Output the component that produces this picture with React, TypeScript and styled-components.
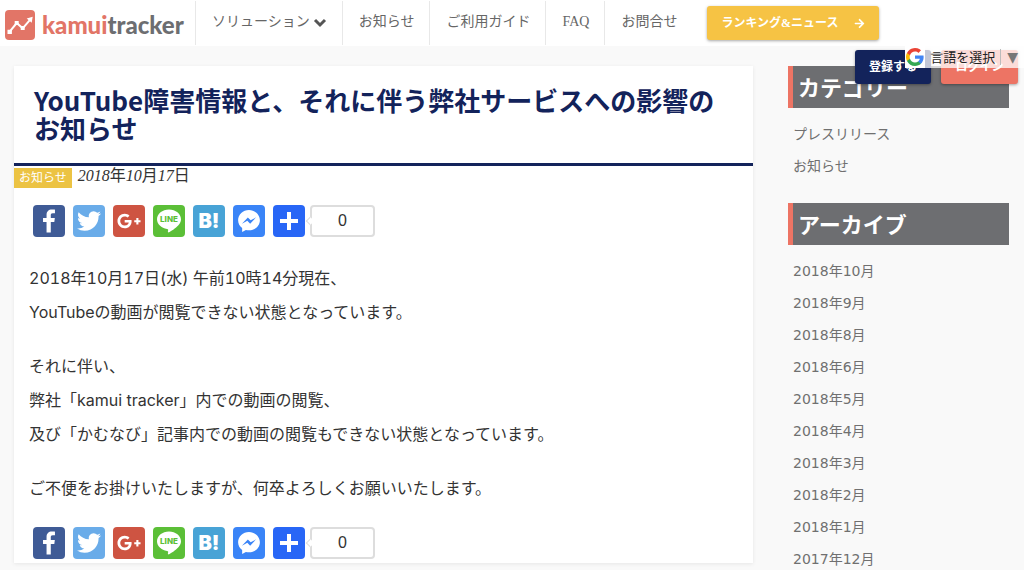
import React from "react";
import styled, { createGlobalStyle } from "styled-components";
import { FaArrowRight, FaGooglePlusG } from "react-icons/fa";

const sans = `Inter, "Noto Sans CJK JP", sans-serif`;
const serif = `"Liberation Serif", "Noto Sans CJK JP", serif`;

const colors = {
  navy: "#13235b",
  coral: "#ed7464",
  amber: "#f6c344",
  slate: "#6d6e71",
};

const GlobalStyle = createGlobalStyle`
  *, *::before, *::after { box-sizing: border-box; }
  body {
    margin: 0;
    background: #f9f9f9;
    color: #333;
    font-family: ${sans};
    font-size: 16px;
    font-variant-numeric: tabular-nums;
  }
  h1, h2, p, ul { margin: 0; padding: 0; }
  ul { list-style: none; }
  a { color: inherit; text-decoration: none; }
  button { border: 0; cursor: pointer; }
  svg { display: block; }
`;

const Header = styled.header`
  position: relative;
  z-index: 1;
  display: flex;
  height: 46px;
  background: #fff;
`;

const Logo = styled.a`
  display: flex;
  align-items: center;
  gap: 7px;
  width: 195px;
  padding: 4px 0 0 5px;
`;

const Wordmark = styled.span`
  color: ${colors.slate};
  font: 900 24px/30px Lato, sans-serif;

  em {
    color: #e27567;
    font-style: normal;
  }
`;

const Nav = styled.nav`
  display: flex;
  padding: 1px 0;
`;

const NavLink = styled.a`
  display: flex;
  align-items: center;
  gap: 3px;
  padding: 0 15px 2px 16px;
  border-left: 1px solid #e8e8e8;
  color: #666;
  font: 14px/20px ${serif};
  white-space: nowrap;
`;

const ActionButton = styled.button<{ $bg: string }>`
  display: flex;
  align-items: center;
  justify-content: center;
  gap: 16px;
  height: 34px;
  padding: 0 14px;
  border-radius: 3px;
  background: ${(p) => p.$bg};
  box-shadow: 0 1px 3px rgba(0, 0, 0, 0.35);
  color: #fff;
  font: 700 12px/16px ${serif};
  white-space: nowrap;
`;

const NewsSlot = styled.div`
  padding: 6px 0 0 15px;
`;

const Account = styled.div`
  position: absolute;
  top: 50px;
  right: 6px;
  display: grid;
  grid-template-columns: 76px 77px;
  gap: 10px;
`;

const LanguageButton = styled.button`
  position: absolute;
  top: 46px;
  right: 0;
  display: flex;
  align-items: center;
  height: 22px;
  padding: 0;
  background: rgba(255, 255, 255, 0.75);
  color: #222;
  font: 13px/20px ${sans};
`;

const GoogleMark = styled.span`
  padding: 1px;
  margin-right: 5px;
  background: #fff;
`;

const Caret = styled.span`
  margin-left: 5px;
  padding: 0 6px;
  border-left: 1px solid #bbb;
  color: #777;
  font: 14px/16px "DejaVu Sans", sans-serif;
`;

const Layout = styled.div`
  display: flex;
  align-items: flex-start;
  gap: 35px;
  padding: 20px 15px 0 14px;
`;

const Article = styled.article`
  flex: 1;
  min-width: 0;
  padding-bottom: 4px;
  background: #fff;
  box-shadow: 0 1px 4px rgba(0, 0, 0, 0.08);
`;

const Title = styled.h1`
  padding: 20px 20px 21px;
  border-bottom: 3px solid ${colors.navy};
  color: ${colors.navy};
  font: 700 26px/28px "Noto Sans CJK JP", sans-serif;
`;

const Meta = styled.div`
  display: flex;
  align-items: flex-start;
  gap: 6px;
  margin-bottom: 17px;
`;

const Tag = styled.a`
  margin-top: 2px;
  padding: 0 5px;
  background: #ecc343;
  color: #fff;
  font-size: 12px;
  line-height: 20px;
`;

const PostDate = styled.time`
  font: 16px/20px ${serif};
`;

const ShareRow = styled.div`
  display: flex;
  gap: 8px;
  padding: 0 19px;
`;

const ShareLink = styled.a<{ $bg: string }>`
  display: grid;
  place-items: center;
  width: 32px;
  height: 32px;
  border-radius: 4px;
  background: ${(p) => p.$bg};
  color: #fff;
`;

const Count = styled.span`
  position: relative;
  width: 65px;
  margin-left: -3px;
  border: 2px solid #ddd;
  border-radius: 4px;
  font: 16px/28px "Liberation Sans", sans-serif;
  text-align: center;

  &::before {
    content: "";
    position: absolute;
    top: 11px;
    left: -5px;
    width: 6px;
    height: 6px;
    border: solid #ddd;
    border-width: 0 0 1px 1px;
    background: #fff;
    transform: rotate(45deg);
  }
`;

const Body = styled.div`
  display: grid;
  gap: 20px;
  padding: 24px 15px 22px;
  line-height: 34px;
`;

const Sidebar = styled.aside`
  flex: 0 0 221px;
  display: grid;
  gap: 21px;
`;

const SideTitle = styled.h2`
  padding: 2px 5px 0;
  border-left: 5px solid ${colors.coral};
  background: ${colors.slate};
  color: #fff;
  font: 700 22px/40px ${sans};
`;

const SideList = styled.ul`
  padding: 10px 5px 0;
  color: #707070;
  font-size: 14px;
  line-height: 32px;
`;

const ArchiveList = styled(SideList)`
  font-family: "DejaVu Sans", "Noto Sans CJK JP", sans-serif;
`;

const glyphs = {
  facebook:
    "M17.78 27.5V17.008h3.522l.527-4.09h-4.05v-2.61c0-1.182.33-1.99 2.023-1.99h2.166V4.66c-.375-.05-1.66-.16-3.155-.16-3.123 0-5.26 1.905-5.26 5.405v3.016h-3.53v4.09h3.53V27.5h4.223z",
  twitter:
    "M28 8.557a9.913 9.913 0 0 1-2.828.775 4.93 4.93 0 0 0 2.166-2.725 9.738 9.738 0 0 1-3.13 1.194 4.92 4.92 0 0 0-3.593-1.55 4.924 4.924 0 0 0-4.794 6.049c-4.09-.21-7.72-2.17-10.15-5.15a4.942 4.942 0 0 0-.665 2.477c0 1.71.87 3.214 2.19 4.1a4.968 4.968 0 0 1-2.23-.616v.06c0 2.39 1.7 4.38 3.952 4.83-.414.115-.85.174-1.297.174-.318 0-.626-.03-.928-.086a4.935 4.935 0 0 0 4.6 3.42 9.893 9.893 0 0 1-6.114 2.107c-.398 0-.79-.023-1.175-.068a13.953 13.953 0 0 0 7.55 2.213c9.056 0 14.01-7.507 14.01-14.013 0-.213-.005-.426-.015-.637.96-.695 1.795-1.56 2.455-2.55z",
  messenger:
    "M16 5C9.986 5 5.11 9.56 5.11 15.182c0 3.2 1.58 6.054 4.046 7.92V27l3.716-2.06c.99.276 2.04.425 3.128.425 6.014 0 10.89-4.56 10.89-10.183S22.013 5 16 5zm1.147 13.655L14.33 15.73l-5.423 3 5.946-6.31 2.816 2.925 5.42-3-5.946 6.31z",
  more: "M14 7h4v18h-4zM7 14h18v4H7z",
};

const Glyph = ({ d }: { d: string }) => (
  <svg width="32" height="32" viewBox="0 0 32 32" fill="currentColor" aria-hidden="true">
    <path d={d} />
  </svg>
);

const ChevronIcon = () => (
  <svg width="14" height="12" viewBox="0 0 14 12" aria-hidden="true">
    <path d="M2 4l5 5 5-5" fill="none" stroke="#555" strokeWidth="3" />
  </svg>
);

const LineIcon = () => (
  <svg width="32" height="32" viewBox="0 0 32 32" aria-hidden="true">
    <path
      fill="#fff"
      d="M28 14.3C28 8.9 22.6 4.5 16 4.5S4 8.9 4 14.3c0 4.8 4.3 8.900 10.100 9.600.400.100.900.300 1 .600.100.300.100.800 0 1.100l-.200 1c0 .300-.200 1.200 1.100.700s6.900-4.100 9.400-7C27.200 18.400 28 16.500 28 14.300z"
    />
    <text x="16" y="17" textAnchor="middle" fill="#5bbf37" fontFamily="Inter, sans-serif" fontWeight="800" fontSize="8">
      LINE
    </text>
  </svg>
);

const HatenaIcon = () => (
  <svg width="32" height="32" viewBox="0 0 32 32" aria-hidden="true">
    <text x="16" y="23" textAnchor="middle" fill="#fff" fontFamily="Inter, sans-serif" fontWeight="900" fontSize="20">
      B!
    </text>
  </svg>
);

const LogoIcon = () => (
  <svg width="30" height="30" viewBox="0 0 30 30" aria-hidden="true">
    <rect width="30" height="30" rx="4" fill="#e27567" />
    <path d="M4.700 21.700 11.700 13l6 5.300L25 9.800" fill="none" stroke="#fff" strokeWidth="2" />
    <path d="M2.500 19.700h4.400v4.400H2.500zM9.700 11h4v4h-4zM15.700 16h4v4h-4zM27.700 6.800l-1 6-5-4.300z" fill="#fff" />
  </svg>
);

const GoogleIcon = () => (
  <svg width="18" height="20" viewBox="0 0 24 24" aria-hidden="true">
    <path fill="#4285f4" d="M23.500 12.300c0-.900-.100-1.500-.200-2.200H12v4.300h6.500c-.300 1.500-1.100 2.700-2.400 3.600v2.900h3.800c2.200-2.100 3.600-5.100 3.600-8.600z" />
    <path fill="#34a853" d="M12 24c3.200 0 6-1.100 7.900-2.900L16.100 18c-1.100.700-2.400 1.200-4.100 1.200-3.100 0-5.800-2.100-6.700-5H1.300v3.100C3.300 21.300 7.300 24 12 24z" />
    <path fill="#fbbc05" d="M5.300 14.300a7 7 0 0 1 0-4.600V6.600h-4a12 12 0 0 0 0 10.800z" />
    <path fill="#ea4335" d="M12 4.700c1.800 0 3.400.600 4.600 1.800L20 3.100A12 12 0 0 0 1.300 6.600l4 3.100c.900-2.900 3.600-5 6.700-5z" />
  </svg>
);

const shares = [
  { name: "Facebook", bg: "#3f5b96", icon: <Glyph d={glyphs.facebook} /> },
  { name: "Twitter", bg: "#6aace9", icon: <Glyph d={glyphs.twitter} /> },
  { name: "Google+", bg: "#ce5442", icon: <FaGooglePlusG size={24} /> },
  { name: "LINE", bg: "#5bbf37", icon: <LineIcon /> },
  { name: "Hatena", bg: "#48a3d6", icon: <HatenaIcon /> },
  { name: "Messenger", bg: "#3a84f7", icon: <Glyph d={glyphs.messenger} /> },
  { name: "共有", bg: "#2866f6", icon: <Glyph d={glyphs.more} /> },
];

const Share = () => (
  <ShareRow>
    {shares.map((s) => (
      <ShareLink key={s.name} href="#" aria-label={s.name} $bg={s.bg}>
        {s.icon}
      </ShareLink>
    ))}
    <Count>0</Count>
  </ShareRow>
);

const archive = [
  "2018年10月", "2018年9月", "2018年8月", "2018年6月", "2018年5月",
  "2018年4月", "2018年3月", "2018年2月", "2018年1月", "2017年12月",
];

export default function App() {
  return (
    <>
      <GlobalStyle />
      <Header>
        <Logo href="#">
          <LogoIcon />
          <Wordmark><em>kamui</em>tracker</Wordmark>
        </Logo>
        <Nav>
          <NavLink href="#">ソリューション<ChevronIcon /></NavLink>
          <NavLink href="#">お知らせ</NavLink>
          <NavLink href="#">ご利用ガイド</NavLink>
          <NavLink href="#">FAQ</NavLink>
          <NavLink href="#">お問合せ</NavLink>
        </Nav>
        <NewsSlot>
          <ActionButton $bg={colors.amber}>
            ランキング&amp;ニュース<FaArrowRight size={11} />
          </ActionButton>
        </NewsSlot>
        <Account>
          <ActionButton $bg={colors.navy}>登録する</ActionButton>
          <ActionButton $bg={colors.coral}>ログイン</ActionButton>
        </Account>
        <LanguageButton>
          <GoogleMark><GoogleIcon /></GoogleMark>
          言語を選択
          <Caret>▼</Caret>
        </LanguageButton>
      </Header>
      <Layout>
        <Article>
          <Title>YouTube障害情報と、それに伴う弊社サービスへの影響のお知らせ</Title>
          <Meta>
            <Tag href="#">お知らせ</Tag>
            <PostDate dateTime="2018-10-17">
              <i>2018</i>年<i>10</i>月<i>17</i>日
            </PostDate>
          </Meta>
          <Share />
          <Body>
            <p>2018年10月17日(水) 午前10時14分現在、<br />YouTubeの動画が閲覧できない状態となっています。</p>
            <p>それに伴い、<br />弊社「kamui tracker」内での動画の閲覧、<br />及び「かむなび」記事内での動画の閲覧もできない状態となっています。</p>
            <p>ご不便をお掛けいたしますが、何卒よろしくお願いいたします。</p>
          </Body>
          <Share />
        </Article>
        <Sidebar>
          <section>
            <SideTitle>カテゴリー</SideTitle>
            <SideList>
              <li><a href="#">プレスリリース</a></li>
              <li><a href="#">お知らせ</a></li>
            </SideList>
          </section>
          <section>
            <SideTitle>アーカイブ</SideTitle>
            <ArchiveList>
              {archive.map((m) => (
                <li key={m}><a href="#">{m}</a></li>
              ))}
            </ArchiveList>
          </section>
        </Sidebar>
      </Layout>
    </>
  );
}
